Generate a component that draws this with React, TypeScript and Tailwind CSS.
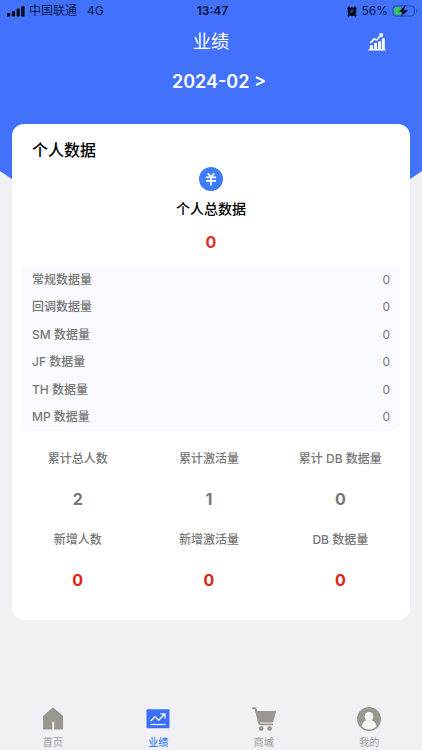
import type { ReactNode } from "react";
import { clsx } from "clsx";

interface Stat {
  label: string;
  value: number;
  highlight?: boolean;
}

interface Tab {
  label: string;
  icon: ReactNode;
  active?: boolean;
}

const BREAKDOWN: Stat[] = [
  { label: "常规数据量", value: 0 },
  { label: "回调数据量", value: 0 },
  { label: "SM 数据量", value: 0 },
  { label: "JF 数据量", value: 0 },
  { label: "TH 数据量", value: 0 },
  { label: "MP 数据量", value: 0 },
];

const TOTALS: Stat[] = [
  { label: "累计总人数", value: 2 },
  { label: "累计激活量", value: 1 },
  { label: "累计 DB 数据量", value: 0 },
  { label: "新增人数", value: 0, highlight: true },
  { label: "新增激活量", value: 0, highlight: true },
  { label: "DB 数据量", value: 0, highlight: true },
];

function SignalIcon() {
  return (
    <svg viewBox="0 0 18 12" className="h-3 w-[18px]" fill="currentColor" aria-hidden>
      <rect x="0" y="8" width="3.2" height="3.6" rx="0.9" />
      <rect x="4.8" y="6" width="3.2" height="5.6" rx="0.9" />
      <rect x="9.6" y="3.6" width="3.2" height="8" rx="0.9" />
      <rect x="14.2" y="1" width="3.4" height="10.6" rx="0.9" />
    </svg>
  );
}

function AlarmIcon() {
  return (
    <svg viewBox="0 0 10 11" className="h-[11px] w-2.5" fill="none" aria-hidden>
      <circle cx="5" cy="5.6" r="4.4" fill="currentColor" />
      <path
        d="M1 2.4 2.2 1.3M9 2.4 7.8 1.3M2 9.2l-.6.6M8 9.2l.6.6"
        stroke="currentColor"
        strokeWidth="1.8"
        strokeLinecap="round"
      />
      <path d="M5.1 3.3v2.7H3" stroke="#4272fc" strokeWidth="0.9" />
    </svg>
  );
}

function BatteryIcon() {
  return (
    <svg viewBox="0 0 26 12" className="h-3 w-[26px]" fill="none" aria-hidden>
      <rect x="0.9" y="0.9" width="21.4" height="10.2" rx="3" stroke="#182f79" strokeOpacity="0.65" />
      <path d="M3.7 2.3H9v7.4H3.7a1.4 1.4 0 0 1-1.4-1.4V3.7a1.4 1.4 0 0 1 1.4-1.4Z" fill="#35c75a" />
      <path d="M24 4.2c1.3.5 1.3 3.1 0 3.6Z" fill="#182f79" fillOpacity="0.8" />
      <path d="M13.4.4 6.5 6.9h4l-1.6 4.8 7.2-6.5h-4.2Z" fill="#050a1c" />
    </svg>
  );
}

function TrendBarsIcon() {
  return (
    <svg viewBox="0 0 18 18" className="size-[18px]" fill="currentColor" aria-hidden>
      <path d="M.5 16.1h17v1.5H.5zM1.9 12.3h3v4.2h-3zM6 10h3v6.5H6zM10.1 8.4h3v8.1h-3zM13.9 5.6h2.9v10.9h-2.9z" />
      <path
        d="M2 9.8c2-.7 3-2.5 4.1-4.1L8.6 7 13.4 1.9"
        fill="none"
        stroke="currentColor"
        strokeWidth="1.6"
        strokeLinejoin="round"
      />
      <path d="m10.7.4 4.3-.2-.3 4.5Z" />
    </svg>
  );
}

function YuanIcon() {
  return (
    <svg viewBox="0 0 24 24" className="size-6" fill="none" aria-hidden>
      <circle cx="12" cy="12" r="12" fill="#3f7cf8" />
      <path
        d="m8.7 6.2 3.3 3.7 3.3-3.7M6.9 10.3h10.2M6.9 13.9h10.2M12 10v8.6"
        stroke="#fff"
        strokeWidth="1.7"
      />
    </svg>
  );
}

function HomeIcon() {
  return (
    <svg viewBox="0 0 24 24" className="size-6" fill="#99978f" aria-hidden>
      <path d="M11.2.9a1.2 1.2 0 0 1 1.6 0l8.7 7.7c.4.4.6.8.6 1.4v11.3c0 .8-.6 1.3-1.3 1.3h-7.6v-7.2a1 1 0 0 0-2 0v7.2H3.3c-.8 0-1.3-.5-1.3-1.3V10c0-.6.2-1 .6-1.4Z" />
    </svg>
  );
}

function ChartIcon() {
  return (
    <svg viewBox="0 0 24 24" className="size-6" fill="none" aria-hidden>
      <rect x="0.5" y="2.2" width="23" height="19" rx="1" fill="#3a70fa" />
      <path d="m4.8 14 4.2-4.2 3.7 3.6 5.5-6.1" stroke="#fff" strokeWidth="1.3" strokeLinejoin="round" />
      <path d="M14.4 6.8h4.5v4.6" stroke="#fff" strokeWidth="1.3" />
      <path d="M4.5 17.5h15" stroke="#fff" strokeWidth="1.2" />
    </svg>
  );
}

function CartIcon() {
  return (
    <svg viewBox="0 0 24 24" className="size-6" fill="#99978f" aria-hidden>
      <path
        d="M1 1.2h2.4L7.6 17.4h12.6"
        fill="none"
        stroke="#99978f"
        strokeWidth="1.9"
        strokeLinecap="round"
        strokeLinejoin="round"
      />
      <path d="M3.6 3.9h19.6c.7 0 1 .5.8 1.1l-2.9 9.8c-.1.5-.5.8-1 .8H6.8Z" />
      <circle cx="9.2" cy="21.6" r="2.4" />
      <circle cx="17.6" cy="21.6" r="2.4" />
    </svg>
  );
}

function ProfileIcon() {
  return (
    <svg viewBox="0 0 24 24" className="size-6" aria-hidden>
      <circle cx="12" cy="12" r="12" fill="#99978f" />
      <path
        d="M12 5c2.5 0 4.3 1.9 4.3 4.4 0 1.7-.7 3.1-1.8 3.9 3.1 1 4.7 3.3 4.9 6.3-2 1.9-4.5 3-7.4 3s-5.4-1.1-7.4-3c.2-3 1.8-5.3 4.9-6.3-1.1-.8-1.8-2.2-1.8-3.9C7.7 6.900 9.500 5 12 5Z"
        fill="#f5f5f8"
      />
    </svg>
  );
}

const TABS: Tab[] = [
  { label: "首页", icon: <HomeIcon /> },
  { label: "业绩", icon: <ChartIcon />, active: true },
  { label: "商城", icon: <CartIcon /> },
  { label: "我的", icon: <ProfileIcon /> },
];

function StatusBar() {
  return (
    <div className="grid h-[22px] grid-cols-3 items-center pr-1 pl-[7px] text-xs text-[#0b1a4d]">
      <div className="flex items-center gap-1">
        <span className="text-[#050a1c]">
          <SignalIcon />
        </span>
        <span>中国联通</span>
        <span className="ml-1.5">4G</span>
      </div>
      <span className="text-center font-semibold text-[#08123a]">13:47</span>
      <div className="flex items-center justify-end gap-1">
        <span className="text-[#050a1c]">
          <AlarmIcon />
        </span>
        <span>56%</span>
        <BatteryIcon />
      </div>
    </div>
  );
}

export default function App() {
  return (
    <div className="flex min-h-screen flex-col bg-[#f0f0f5] font-['Inter','Noto_Sans_CJK_SC',sans-serif]">
      {/* The lower edge tapers inwards and runs under the card. */}
      <header className="h-[211px] bg-[#4272fc] [clip-path:polygon(0_0,100%_0,100%_171px,86%_100%,14%_100%,0_171px)]">
        <StatusBar />
        <div className="grid h-10 grid-cols-3 items-center text-white">
          <h1 className="col-start-2 text-center text-lg">业绩</h1>
          <button type="button" aria-label="统计" className="mr-9 justify-self-end">
            <TrendBarsIcon />
          </button>
        </div>
        <div className="flex h-10 items-center justify-center pl-4">
          <button type="button" className="text-lg font-semibold text-white">
            2024-02 &gt;
          </button>
        </div>
      </header>

      <main className="relative mx-3 -mt-[87px] rounded-xl bg-white pb-7">
        <h2 className="px-5 pt-[14px] text-base leading-6 font-medium text-black">个人数据</h2>

        <section className="mt-[5px] flex flex-col items-center">
          <YuanIcon />
          <h3 className="mt-2 text-sm leading-5 font-medium text-black">个人总数据</h3>
          <strong className="mt-[11px] text-base leading-6 font-bold text-[#e52b2b]">0</strong>
        </section>

        <dl className="mx-2.5 mt-3 grid h-[165px] grid-rows-6 rounded-md bg-[#f9faff] px-2.5 text-xs text-[#777]">
          {BREAKDOWN.map((item) => (
            <div key={item.label} className="flex items-center justify-between">
              <dt className="font-medium">{item.label}</dt>
              <dd>{item.value}</dd>
            </div>
          ))}
        </dl>

        <dl className="mt-[18px] grid grid-cols-3 gap-y-[19px] pr-1 text-center">
          {TOTALS.map((item) => (
            <div key={item.label}>
              <dt className="text-xs leading-5 font-medium text-[#777]">{item.label}</dt>
              <dd
                className={clsx(
                  "mt-[18px] text-base leading-6 font-bold",
                  item.highlight ? "text-[#e0220f]" : "text-[#777]"
                )}
              >
                {item.value}
              </dd>
            </div>
          ))}
        </dl>
      </main>

      <nav className="mt-auto grid grid-cols-4">
        {TABS.map((tab) => (
          <a
            key={tab.label}
            href="#"
            aria-current={tab.active ? "page" : undefined}
            className={clsx(
              "flex flex-col items-center gap-[3px] text-[10px] leading-4",
              tab.active ? "font-medium text-[#3a82f7]" : "text-[#99999c]"
            )}
          >
            {tab.icon}
            {tab.label}
          </a>
        ))}
      </nav>
    </div>
  );
}
